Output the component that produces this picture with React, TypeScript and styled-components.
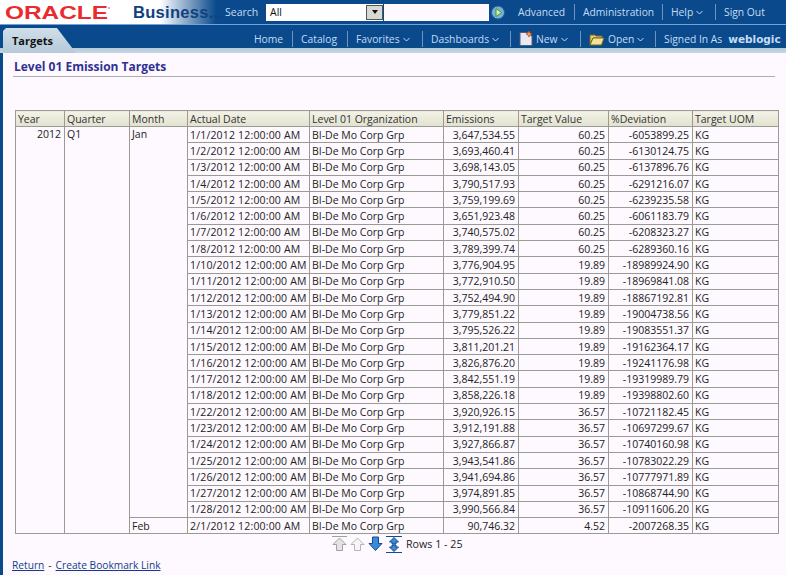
import React from 'react';
import styled, { createGlobalStyle } from 'styled-components';

const Global = createGlobalStyle`
  html, body { margin: 0; padding: 0; background: #fdf9ff; }
  body { font-family: "Open Sans", "Noto Sans", sans-serif; width: 786px; height: 575px; overflow: hidden; }
`;
const font = `"Open Sans", "Noto Sans", sans-serif`;

const Page = styled.div`
  width: 786px; height: 575px; display: flex; flex-direction: column; overflow: hidden;
  background: #fdf9ff; font-family: ${font}; font-size: 10.5px; color: #222;
`;
const TopBar = styled.header`
  height: 24px; display: flex; align-items: center; flex: none;
  background: linear-gradient(90deg, #fff 0, #fff 160px, #0a4a8c 216px, #0a4a8c 100%);
  border-bottom: 1px solid #6fa3dc;
`;
const Logo = styled.div`width: 128px; padding-left: 5px; box-sizing: border-box; margin-right: 5px; flex: none; display: flex; align-items: center;`;
const LogoSvg = styled.svg`overflow: visible; flex: none;`;
const BrandText = styled.div`
  width: 92px; flex: none; font: bold 16.5px "Liberation Sans", sans-serif; letter-spacing: 0.3px; color: #10407f; white-space: nowrap;
`;
const SearchLabel = styled.span`color: #c5dcf3; font-size: 10.5px; width: 41px; flex: none;`;
const Select = styled.div`
  width: 117px; height: 17px; background: #fff; display: flex; align-items: center; justify-content: space-between;
  color: #111; font-size: 10.5px; padding-left: 4px; box-sizing: border-box; flex: none;
`;
const SelectBtn = styled.span`
  width: 17px; height: 15px; background: #d8d8d4; border: 1px solid #555; box-sizing: border-box; margin-right: 0;
  display: flex; align-items: center; justify-content: center;
  &::after { content: ''; border: 3px solid transparent; border-top: 4px solid #111; border-bottom: 0; }
`;
const SearchInput = styled.div`width: 105px; height: 17px; background: #fdf9ff; margin-left: 1px; flex: none;`;
const Go = styled.svg`margin-left: 2px; flex: none;`;
const BarNav = styled.nav<{ $left?: number }>`display: flex; align-items: center; margin-left: ${p => p.$left ?? 0}px;`;
const NavItem = styled.span<{ $w: number; $sep?: boolean }>`
  width: ${p => p.$w}px; box-sizing: border-box; height: 16px; display: flex; align-items: center; gap: 3px;
  padding-left: 8px; color: #c5dcf3; font-size: 10.3px; white-space: nowrap; flex: none;
  border-left: ${p => (p.$sep ? '1px solid #6f93bb' : '1px solid transparent')};
`;
const Strong = styled.b`font-weight: 700; margin-left: 3px; color: #c5dcf3; font-family: "DejaVu Sans", sans-serif; font-size: 10.5px;`;
const TabRow = styled.div`
  height: 28px; flex: none; display: flex; align-items: flex-end; justify-content: space-between;
  background: linear-gradient(180deg, #0a4a8c 0, #0a4a8c 21px, #064f7e 23px, #b6cbdb 23px, #c4d6e2 100%);
  padding-left: 3px;
`;
const Tab = styled.div`
  width: 73px; height: 25px; box-sizing: border-box; padding: 5px 0 0 9px; font: 700 11px ${font}; color: #111;
  background: linear-gradient(180deg, #d0dfe9, #b5c9d9);
  clip-path: polygon(0 3px, 3px 0, 54px 0, 73px 25px, 0 25px);
`;
const TabNav = styled.nav`display: flex; align-self: flex-start; margin-top: 6px;`;
const Body = styled.main`
  flex: 1; min-height: 0; border-left: 3px solid #0a4a8c; padding: 0 8px 0 9px; display: flex; flex-direction: column;
`;
const Title = styled.h1`
  margin: 6px 0 0 2px; font: bold 12px ${font}; color: #2f3192; height: 16px; line-height: 16px;
`;
const Rule = styled.hr`margin: 1px 0 0 1px; width: 762px; border: 0; height: 1px; background: #a9aeb7;`;
const Table = styled.table`
  margin: 33px 0 0 3px; width: 764px; border-collapse: collapse; table-layout: fixed; font-size: 10.5px; color: #222;
`;
const Th = styled.th`
  height: 15px; padding: 0 0 0 2px; text-align: left; font-weight: 400; color: #333; border: 1px solid #999b94;
  background: linear-gradient(180deg, #f3f2e6, #e2e2d0); white-space: nowrap; overflow: hidden;
`;
const Td = styled.td<{ $r?: boolean }>`
  height: 15.3px; padding: 0 3px 0 2px; border: 1px solid #999b94; white-space: nowrap; overflow: hidden;
  text-align: ${p => (p.$r ? 'right' : 'left')};
`;
const SpanTd = styled(Td)`vertical-align: top;`;
const DateTd = styled(Td)`letter-spacing: 0.18px;`;
const Pager = styled.div`
  display: flex; align-items: center; gap: 3px; height: 20px; padding-left: 320px;
`;
const PagerText = styled.span`margin-left: 1px; font-size: 10.7px; color: #222;`;
const Footer = styled.div`margin: 4px 0 0 0; font-size: 10.2px; color: #222; display: flex; gap: 4px;`;
const FootLink = styled.a`color: #143c8c; text-decoration: underline;`;

const cols = [49, 65, 58, 122, 134, 75, 90, 84, 86];
const heads = ['Year', 'Quarter', 'Month', 'Actual Date', 'Level 01 Organization', 'Emissions', 'Target Value', '%Deviation', 'Target UOM'];
const rows: [string, string, string, string][] = [
  ['1/1/2012', '3,647,534.55', '60.25', '-6053899.25'],
  ['1/2/2012', '3,693,460.41', '60.25', '-6130124.75'],
  ['1/3/2012', '3,698,143.05', '60.25', '-6137896.76'],
  ['1/4/2012', '3,790,517.93', '60.25', '-6291216.07'],
  ['1/5/2012', '3,759,199.69', '60.25', '-6239235.58'],
  ['1/6/2012', '3,651,923.48', '60.25', '-6061183.79'],
  ['1/7/2012', '3,740,575.02', '60.25', '-6208323.27'],
  ['1/8/2012', '3,789,399.74', '60.25', '-6289360.16'],
  ['1/10/2012', '3,776,904.95', '19.89', '-18989924.90'],
  ['1/11/2012', '3,772,910.50', '19.89', '-18969841.08'],
  ['1/12/2012', '3,752,494.90', '19.89', '-18867192.81'],
  ['1/13/2012', '3,779,851.22', '19.89', '-19004738.56'],
  ['1/14/2012', '3,795,526.22', '19.89', '-19083551.37'],
  ['1/15/2012', '3,811,201.21', '19.89', '-19162364.17'],
  ['1/16/2012', '3,826,876.20', '19.89', '-19241176.98'],
  ['1/17/2012', '3,842,551.19', '19.89', '-19319989.79'],
  ['1/18/2012', '3,858,226.18', '19.89', '-19398802.60'],
  ['1/22/2012', '3,920,926.15', '36.57', '-10721182.45'],
  ['1/23/2012', '3,912,191.88', '36.57', '-10697299.67'],
  ['1/24/2012', '3,927,866.87', '36.57', '-10740160.98'],
  ['1/25/2012', '3,943,541.86', '36.57', '-10783022.29'],
  ['1/26/2012', '3,941,694.86', '36.57', '-10777971.89'],
  ['1/27/2012', '3,974,891.85', '36.57', '-10868744.90'],
  ['1/28/2012', '3,990,566.84', '36.57', '-10911606.20'],
  ['2/1/2012', '90,746.32', '4.52', '-2007268.35'],
];

const Chevron = () => (
  <svg width="7" height="5" viewBox="0 0 7 5"><path d="M0.5 1 L3.5 4 L6.5 1" fill="none" stroke="#c5dcf3" strokeWidth="1" /></svg>
);
const ArrowIcon = ({ up, fill, stroke, bars }: { up: boolean; fill: string; stroke: string; bars?: boolean }) => (
  <svg width="15" height="16" viewBox="0 0 15 16">
    {bars && <rect x="0" y="0" width="15" height="1" fill={stroke} />}
    <path d={up ? 'M7.5 2 L14 8.5 L10.5 8.5 L10.5 14.5 L4.5 14.5 L4.5 8.5 L1 8.5 Z' : 'M4.5 1 L10.5 1 L10.5 7.5 L14 7.5 L7.5 14.5 L1 7.5 L4.5 7.5 Z'} fill={fill} stroke={stroke} />
  </svg>
);
const AllIcon = () => (
  <svg width="16" height="17" viewBox="0 0 16 17">
    <path d="M8 1.5 L12.5 6 L10 6 L10 8 L6 8 L6 6 L3.5 6 Z" fill="#3a8ad8" stroke="#13498f" />
    <path d="M8 15.5 L12.5 11 L10 11 L10 9 L6 9 L6 11 L3.5 11 Z" fill="#3a8ad8" stroke="#13498f" />
    <rect x="0" y="0" width="16" height="1" fill="#13498f" />
    <rect x="0" y="16" width="16" height="1" fill="#13498f" />
  </svg>
);

export default function App() {
  return (
    <Page>
      <Global />
      <TopBar>
        <Logo>
          <LogoSvg width="105" height="15" viewBox="0 0 105 15">
            <text x="0" y="13.5" fontFamily='"Liberation Sans", sans-serif' fontWeight="700" fontSize="18" textLength="103" lengthAdjust="spacingAndGlyphs" fill="#ea2a2e">ORACLE</text>
            <circle cx="104" cy="3" r="0.8" fill="#ea2a2e" />
          </LogoSvg>
        </Logo>
        <BrandText>Business...</BrandText>
        <SearchLabel>Search</SearchLabel>
        <Select>All<SelectBtn /></Select>
        <SearchInput />
        <Go width="14" height="15" viewBox="0 0 14 15">
          <circle cx="7" cy="7.5" r="6.5" fill="#74b2da" stroke="#1d5f95" />
          <path d="M5 3.5 L10.5 7.5 L5 11.5 Z" fill="#d8edb8" stroke="#4c9a20" />
        </Go>
        <BarNav $left={4}>
          <NavItem $w={65}>Advanced</NavItem>
          <NavItem $w={88} $sep>Administration</NavItem>
          <NavItem $w={53} $sep>Help <Chevron /></NavItem>
          <NavItem $w={62} $sep>Sign Out</NavItem>
        </BarNav>
      </TopBar>
      <TabRow>
        <Tab>Targets</Tab>
        <TabNav>
          <NavItem $w={47}>Home</NavItem>
          <NavItem $w={55} $sep>Catalog</NavItem>
          <NavItem $w={75} $sep>Favorites <Chevron /></NavItem>
          <NavItem $w={88} $sep>Dashboards <Chevron /></NavItem>
          <NavItem $w={70} $sep>
            <svg width="14" height="16" viewBox="0 0 14 16"><path d="M1 1.5 H9 L13 5.5 V14.5 H1 Z" fill="#e9e9f2" stroke="#5a5a7a" /><path d="M10 0 L11 2 L13 3 L11 4 L10 6 L9 4 L7 3 L9 2 Z" fill="#f0b030" stroke="#c33" strokeWidth="0.7" /></svg>
            New <Chevron />
          </NavItem>
          <NavItem $w={75} $sep>
            <svg width="16" height="13" viewBox="0 0 16 13"><path d="M1 2 H6 L7 3 H13 V5 H4 L1 12 Z" fill="#e6cf6e" stroke="#7a6420" /><path d="M4 5 H15 L12.5 12 H1 Z" fill="#f3e296" stroke="#7a6420" /></svg>
            Open <Chevron />
          </NavItem>
          <NavItem $w={131} $sep>Signed In As <Strong>weblogic</Strong></NavItem>
        </TabNav>
      </TabRow>
      <Body>
        <Title>Level 01 Emission Targets</Title>
        <Rule />
        <Table>
          <colgroup>{cols.map((w, i) => <col key={i} style={{ width: w }} />)}</colgroup>
          <thead><tr>{heads.map(h => <Th key={h}>{h}</Th>)}</tr></thead>
          <tbody>
            {rows.map((r, i) => (
              <tr key={r[0]}>
                {i === 0 && <SpanTd $r rowSpan={25}>2012</SpanTd>}
                {i === 0 && <SpanTd rowSpan={25}>Q1</SpanTd>}
                {i === 0 && <SpanTd rowSpan={24}>Jan</SpanTd>}
                {i === 24 && <Td>Feb</Td>}
                <DateTd>{r[0]} 12:00:00 AM</DateTd>
                <Td>BI-De Mo Corp Grp</Td>
                <Td $r>{r[1]}</Td>
                <Td $r>{r[2]}</Td>
                <Td $r>{r[3]}</Td>
                <Td>KG</Td>
              </tr>
            ))}
          </tbody>
        </Table>
        <Pager>
          <ArrowIcon up bars fill="#e4e4e4" stroke="#a0a0a0" />
          <ArrowIcon up fill="#f6f6f6" stroke="#b4b4b4" />
          <ArrowIcon up={false} fill="#3a8ad8" stroke="#13498f" />
          <AllIcon />
          <PagerText>Rows 1 - 25</PagerText>
        </Pager>
        <Footer><FootLink>Return</FootLink> - <FootLink>Create Bookmark Link</FootLink></Footer>
      </Body>
    </Page>
  );
}
